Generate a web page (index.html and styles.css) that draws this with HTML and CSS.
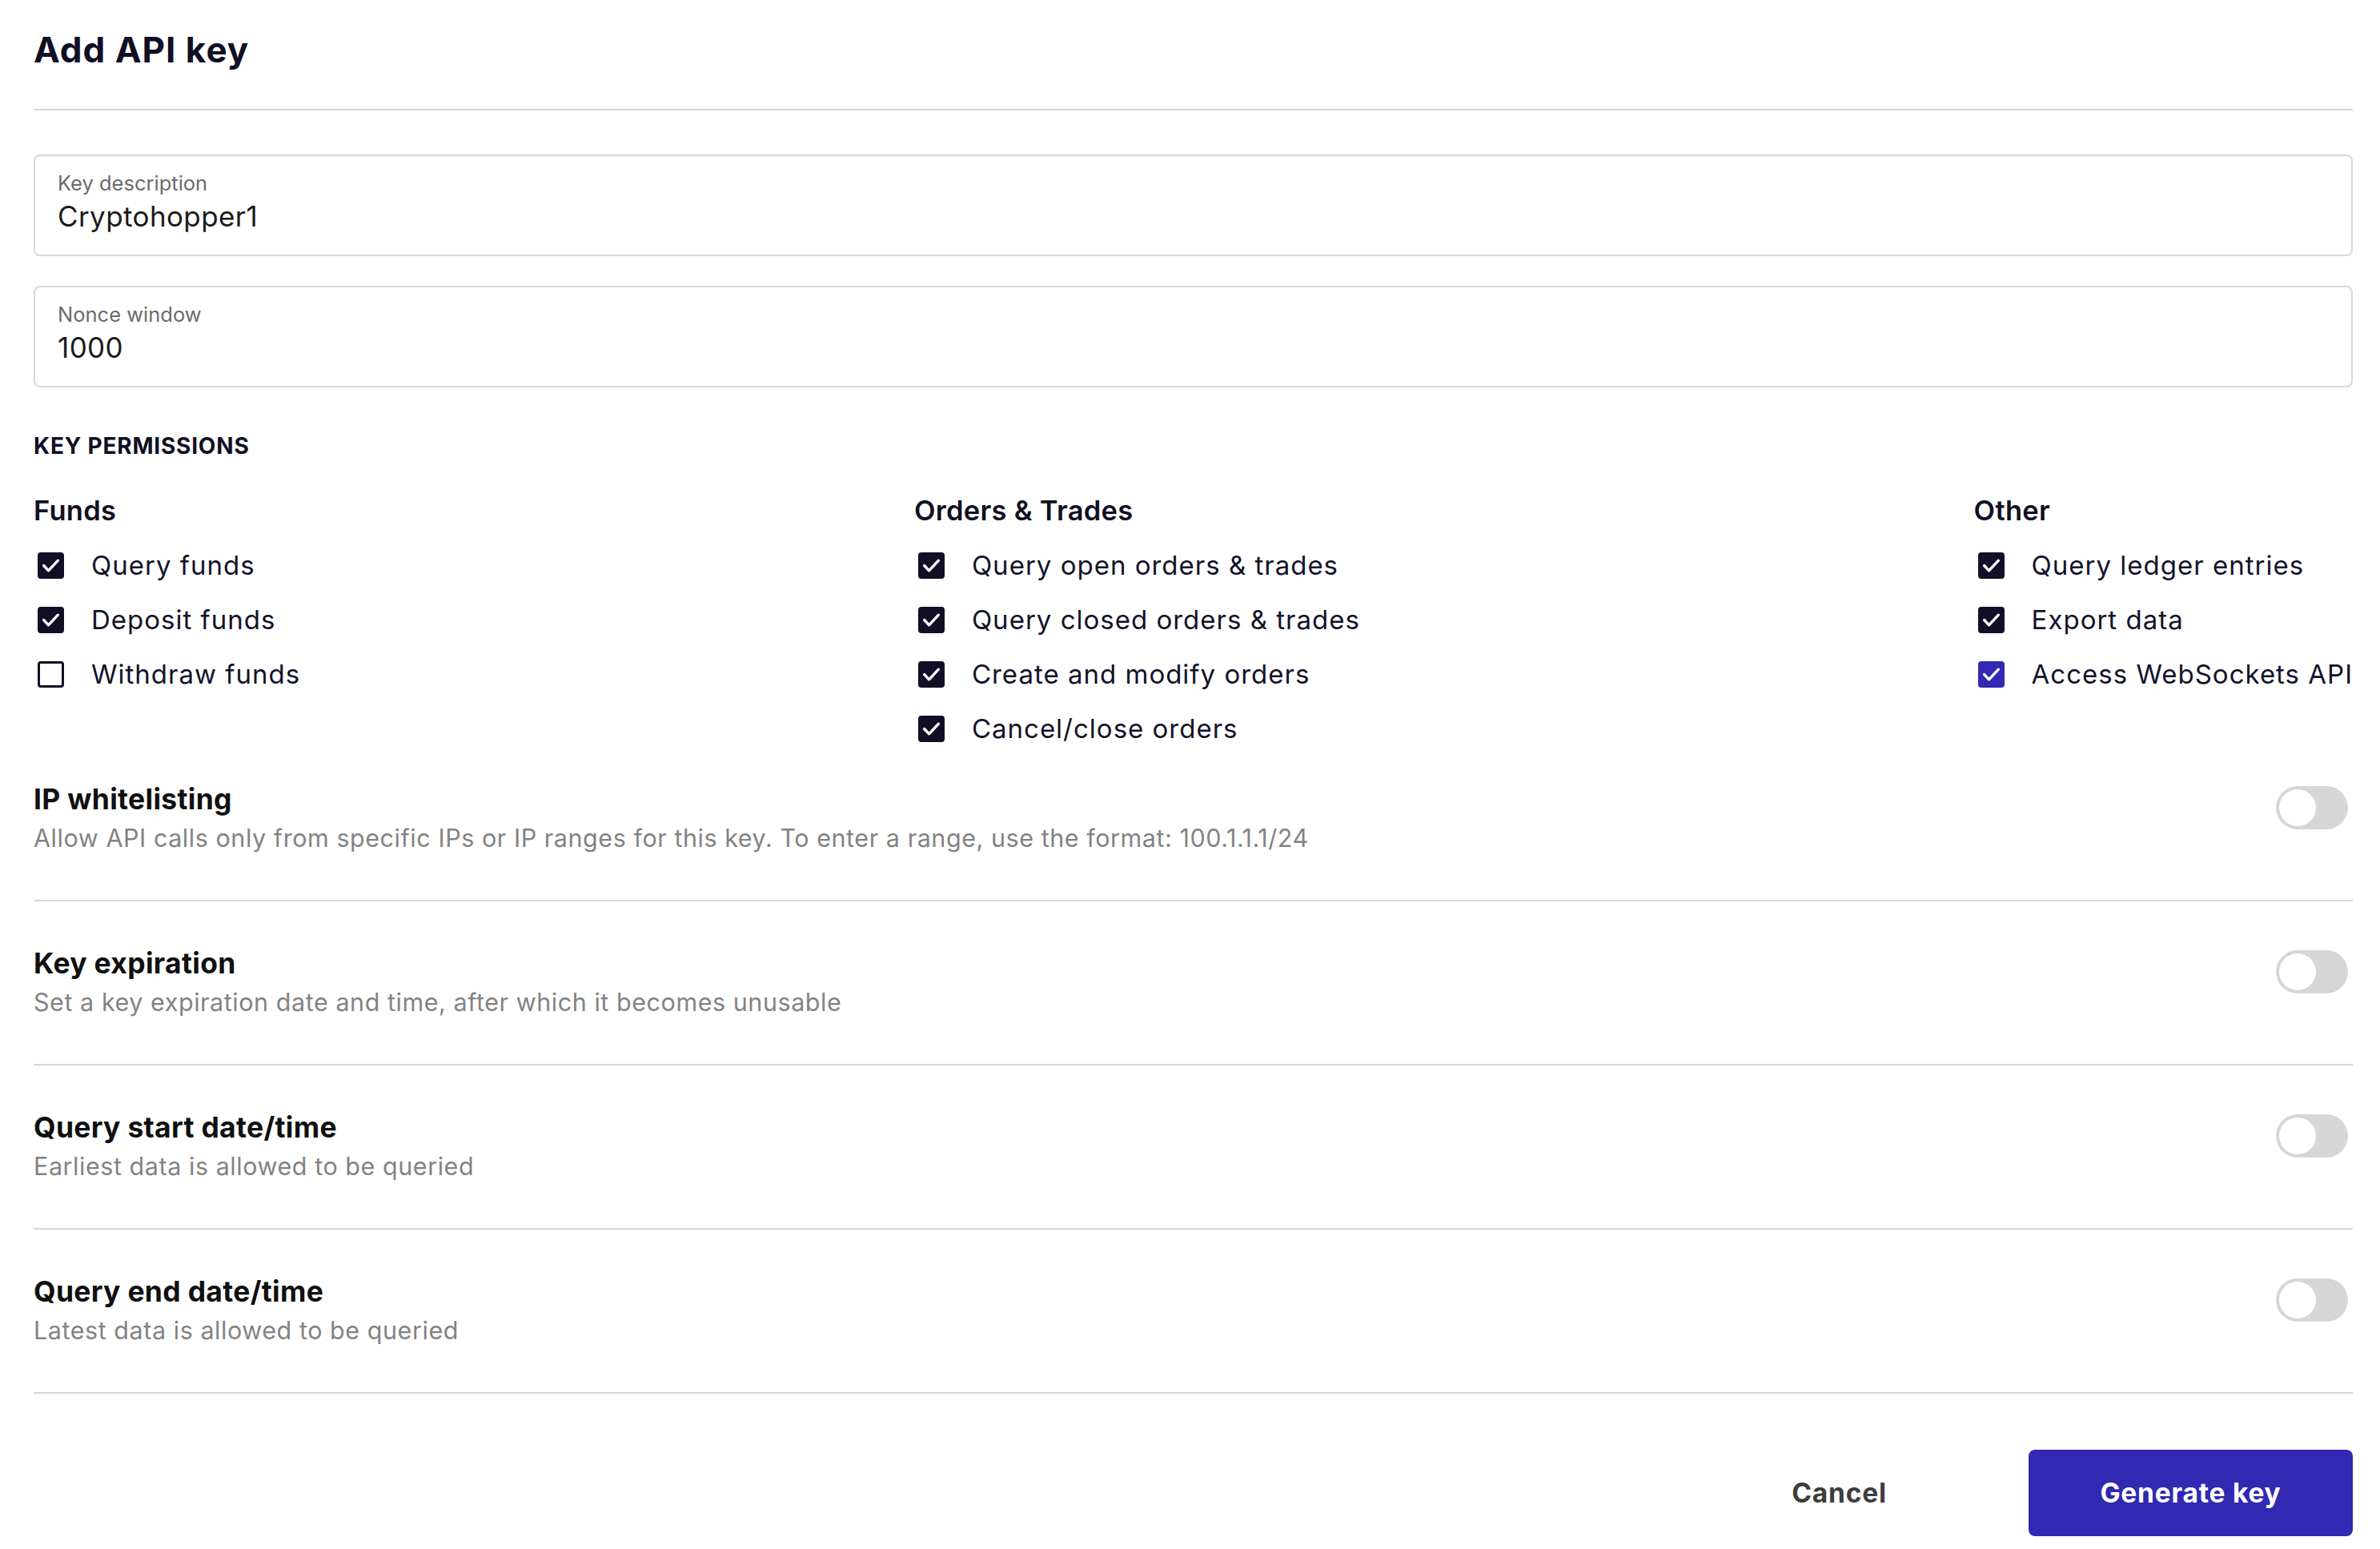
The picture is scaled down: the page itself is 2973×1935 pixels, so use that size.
FILE: index.html
```html
<!DOCTYPE html>
<html lang="en">
  <head>
    <meta charset="UTF-8">
    <title>Add API key</title>
    <link rel="stylesheet" href="styles.css">
  </head>
  <body>
    <div class="modal">
      <div class="modal-header">
        <h1>Add API key</h1>
      </div>

      <div class="field">
        <label>Key description</label>
        <div class="field-value">Cryptohopper1</div>
      </div>
      <div class="field">
        <label>Nonce window</label>
        <div class="field-value">1000</div>
      </div>

      <h4 class="perm-title">KEY PERMISSIONS</h4>
      <div class="perm-grid">
        <div class="perm-col">
          <h3>Funds</h3>
          <div class="perm-row"><span class="check on"><svg viewBox="0 0 32 32"><path d="M5.5 16l7 7.5 14-15"/></svg></span>Query funds</div>
          <div class="perm-row"><span class="check on"><svg viewBox="0 0 32 32"><path d="M5.5 16l7 7.5 14-15"/></svg></span>Deposit funds</div>
          <div class="perm-row"><span class="check"></span>Withdraw funds</div>
        </div>
        <div class="perm-col">
          <h3>Orders &amp; Trades</h3>
          <div class="perm-row"><span class="check on"><svg viewBox="0 0 32 32"><path d="M5.5 16l7 7.5 14-15"/></svg></span>Query open orders &amp; trades</div>
          <div class="perm-row"><span class="check on"><svg viewBox="0 0 32 32"><path d="M5.5 16l7 7.5 14-15"/></svg></span>Query closed orders &amp; trades</div>
          <div class="perm-row"><span class="check on"><svg viewBox="0 0 32 32"><path d="M5.5 16l7 7.5 14-15"/></svg></span>Create and modify orders</div>
          <div class="perm-row"><span class="check on"><svg viewBox="0 0 32 32"><path d="M5.5 16l7 7.5 14-15"/></svg></span>Cancel/close orders</div>
        </div>
        <div class="perm-col">
          <h3>Other</h3>
          <div class="perm-row"><span class="check on"><svg viewBox="0 0 32 32"><path d="M5.5 16l7 7.5 14-15"/></svg></span>Query ledger entries</div>
          <div class="perm-row"><span class="check on"><svg viewBox="0 0 32 32"><path d="M5.5 16l7 7.5 14-15"/></svg></span>Export data</div>
          <div class="perm-row"><span class="check on active"><svg viewBox="0 0 32 32"><path d="M5.5 16l7 7.5 14-15"/></svg></span>Access WebSockets API</div>
        </div>
      </div>

      <div class="options">
        <div class="option">
          <div class="option-text">
            <h3>IP whitelisting</h3>
            <p>Allow API calls only from specific IPs or IP ranges for this key. To enter a range, use the format: 100.1.1.1/24</p>
          </div>
          <span class="toggle"></span>
        </div>
        <div class="option">
          <div class="option-text">
            <h3>Key expiration</h3>
            <p>Set a key expiration date and time, after which it becomes unusable</p>
          </div>
          <span class="toggle"></span>
        </div>
        <div class="option">
          <div class="option-text">
            <h3>Query start date/time</h3>
            <p>Earliest data is allowed to be queried</p>
          </div>
          <span class="toggle"></span>
        </div>
        <div class="option">
          <div class="option-text">
            <h3>Query end date/time</h3>
            <p>Latest data is allowed to be queried</p>
          </div>
          <span class="toggle"></span>
        </div>
      </div>

      <div class="modal-footer">
        <button class="btn btn-cancel">Cancel</button>
        <button class="btn btn-primary">Generate key</button>
      </div>
    </div>
  </body>
</html>
```

FILE: styles.css
```css
body {
  margin: 0;
  background: #fff;
  font-family: Inter, "Noto Sans", sans-serif;
  color: #13122a;
}
.modal {
  padding: 0 34px 0 42px;
}
.modal-header {
  padding-top: 37px;
  padding-bottom: 49px;
  border-bottom: 2px solid #d6d6d6;
}
.modal-header h1 {
  margin: 0;
  font-size: 44px;
  line-height: 50px;
  font-weight: 700;
  letter-spacing: 1px;
  color: #100f24;
}
.field {
  margin-top: 55px;
  padding: 18px 28px 28px;
  border: 2px solid #d9d9d9;
  border-radius: 8px;
}
.field + .field {
  margin-top: 37px;
}
.field label {
  display: block;
  font-size: 25.5px;
  line-height: 32px;
  color: #6b6b6b;
}
.field-value {
  margin-top: 5px;
  font-size: 35px;
  line-height: 40px;
  letter-spacing: 0.4px;
  color: #1b1b1b;
}
.perm-title {
  margin: 56px 0 0;
  font-size: 28px;
  line-height: 34px;
  font-weight: 700;
  letter-spacing: 0.8px;
  color: #100f24;
}
.perm-grid {
  display: flex;
  justify-content: space-between;
  margin-top: 44px;
}
.perm-col h3 {
  margin: 0 0 14px;
  font-size: 34.5px;
  line-height: 40px;
  font-weight: 600;
  letter-spacing: 0.3px;
  color: #100f24;
}
.perm-row {
  display: flex;
  align-items: center;
  height: 68px;
  font-size: 33px;
  letter-spacing: 1px;
  color: #13122a;
}
.check {
  box-sizing: border-box;
  width: 33px;
  height: 33px;
  margin: 0 34px 0 5px;
  border: 3px solid #110f26;
  border-radius: 4px;
  flex-shrink: 0;
}
.check.on {
  background: #110f26;
}
.check.active {
  background: #3129b3;
  border-color: #3129b3;
}
.check svg {
  display: block;
  width: 27px;
  height: 27px;
}
.check path {
  fill: none;
  stroke: #fff;
  stroke-width: 4;
  stroke-linecap: round;
  stroke-linejoin: round;
}
.options {
  margin-top: 34px;
}
.option {
  display: flex;
  justify-content: space-between;
  align-items: flex-start;
  padding-bottom: 58px;
  border-bottom: 2px solid #d6d6d6;
}
.option + .option {
  padding-top: 57px;
}
.option h3 {
  margin: 0;
  font-size: 35.5px;
  line-height: 42px;
  font-weight: 700;
  letter-spacing: 0.3px;
  color: #101010;
}
.option p {
  margin: 8px 0 0;
  font-size: 30.5px;
  line-height: 38px;
  letter-spacing: 0.55px;
  color: #838383;
}
.toggle {
  position: relative;
  width: 90px;
  height: 54px;
  margin: 4px 6px 0 0;
  border-radius: 27px;
  background: #d6d6d6;
  flex-shrink: 0;
}
.toggle::after {
  content: "";
  position: absolute;
  top: 4px;
  left: 4px;
  width: 46px;
  height: 46px;
  border-radius: 50%;
  background: #fff;
}
.modal-footer {
  display: flex;
  justify-content: flex-end;
  gap: 34px;
  margin-top: 70px;
}
.btn {
  width: 405px;
  height: 108px;
  border: 0;
  border-radius: 8px;
  font-family: inherit;
  font-size: 33.5px;
  font-weight: 700;
  letter-spacing: 0.8px;
  cursor: pointer;
}
.btn-cancel {
  background: transparent;
  color: #3d3d3d;
}
.btn-primary {
  background: #3129b1;
  color: #fff;
}
```
